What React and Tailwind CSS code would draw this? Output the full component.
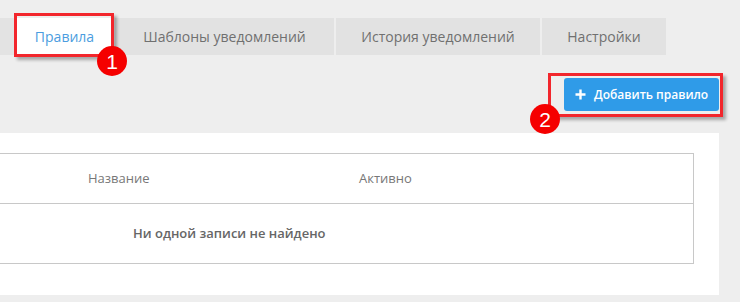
import React from 'react';

const tabs = [
  { label: 'Шаблоны уведомлений', w: 'w-[219px]' },
  { label: 'История уведомлений', w: 'w-[204px]' },
  { label: 'Настройки', w: 'w-[124px]' },
];

const Marker = ({ className }) => (
  <div
    className={`absolute border-[3px] border-[#f2262c] shadow-[3px_3px_3px_rgba(0,0,0,0.3)] ${className}`}
  />
);

const Badge = ({ n, className }) => (
  <div
    className={`absolute w-[30px] h-[30px] rounded-full bg-[#f50000] text-white flex items-center justify-center text-[21px] leading-none font-['Liberation_Sans',sans-serif] ${className}`}
  >
    {n}
  </div>
);

const App = () => {
  return (
    <div className="relative w-[740px] h-[302px] overflow-hidden bg-[#eeeeee] font-['Open_Sans',sans-serif]">
      <div className="pt-[18px] flex h-[55px]">
        <div className="w-[16px] bg-[#e3e3e3]" />
        <div className="w-[97px] bg-white flex items-center justify-center text-[14px] text-[#4b9de0]">
          Правила
        </div>
        {tabs.map((t) => (
          <div
            key={t.label}
            className={`${t.w} ml-[2px] bg-[#e2e2e2] flex items-center justify-center text-[14px] text-[#707070]`}
          >
            {t.label}
          </div>
        ))}
      </div>

      <div className="flex justify-end pr-[21px] mt-[23px]">
        <button className="w-[155px] h-[33px] rounded-[3px] bg-[#2f9be8] text-white text-[12px] font-semibold flex items-center gap-[8px] pl-[11px]">
          <svg width="11" height="11" viewBox="0 0 11 11">
            <path d="M5.5 0.5v10M0.5 5.5h10" stroke="white" strokeWidth="2.4" />
          </svg>
          Добавить правило
        </button>
      </div>

      <div className="mt-[22px] w-[719px] h-[162px] bg-white pt-[20px] pr-[25px]">
        <div className="border-t border-r border-b border-[#c8c8c8] text-[13px]">
          <div className="h-[50px] flex items-center border-b border-[#c8c8c8] text-[#777777]">
            <div className="w-[359px] pl-[88px]">Название</div>
            <div>Активно</div>
          </div>
          <div className="h-[59px] flex items-center pl-[133px] font-semibold text-[#666666]">
            Ни одной записи не найдено
          </div>
        </div>
      </div>

      <Marker className="left-[14px] top-[13px] w-[100px] h-[44px]" />
      <Marker className="left-[548px] top-[73px] w-[175px] h-[44px]" />
      <Badge n="1" className="left-[97px] top-[46px]" />
      <Badge n="2" className="left-[530px] top-[104px]" />
    </div>
  );
};

export default App;
